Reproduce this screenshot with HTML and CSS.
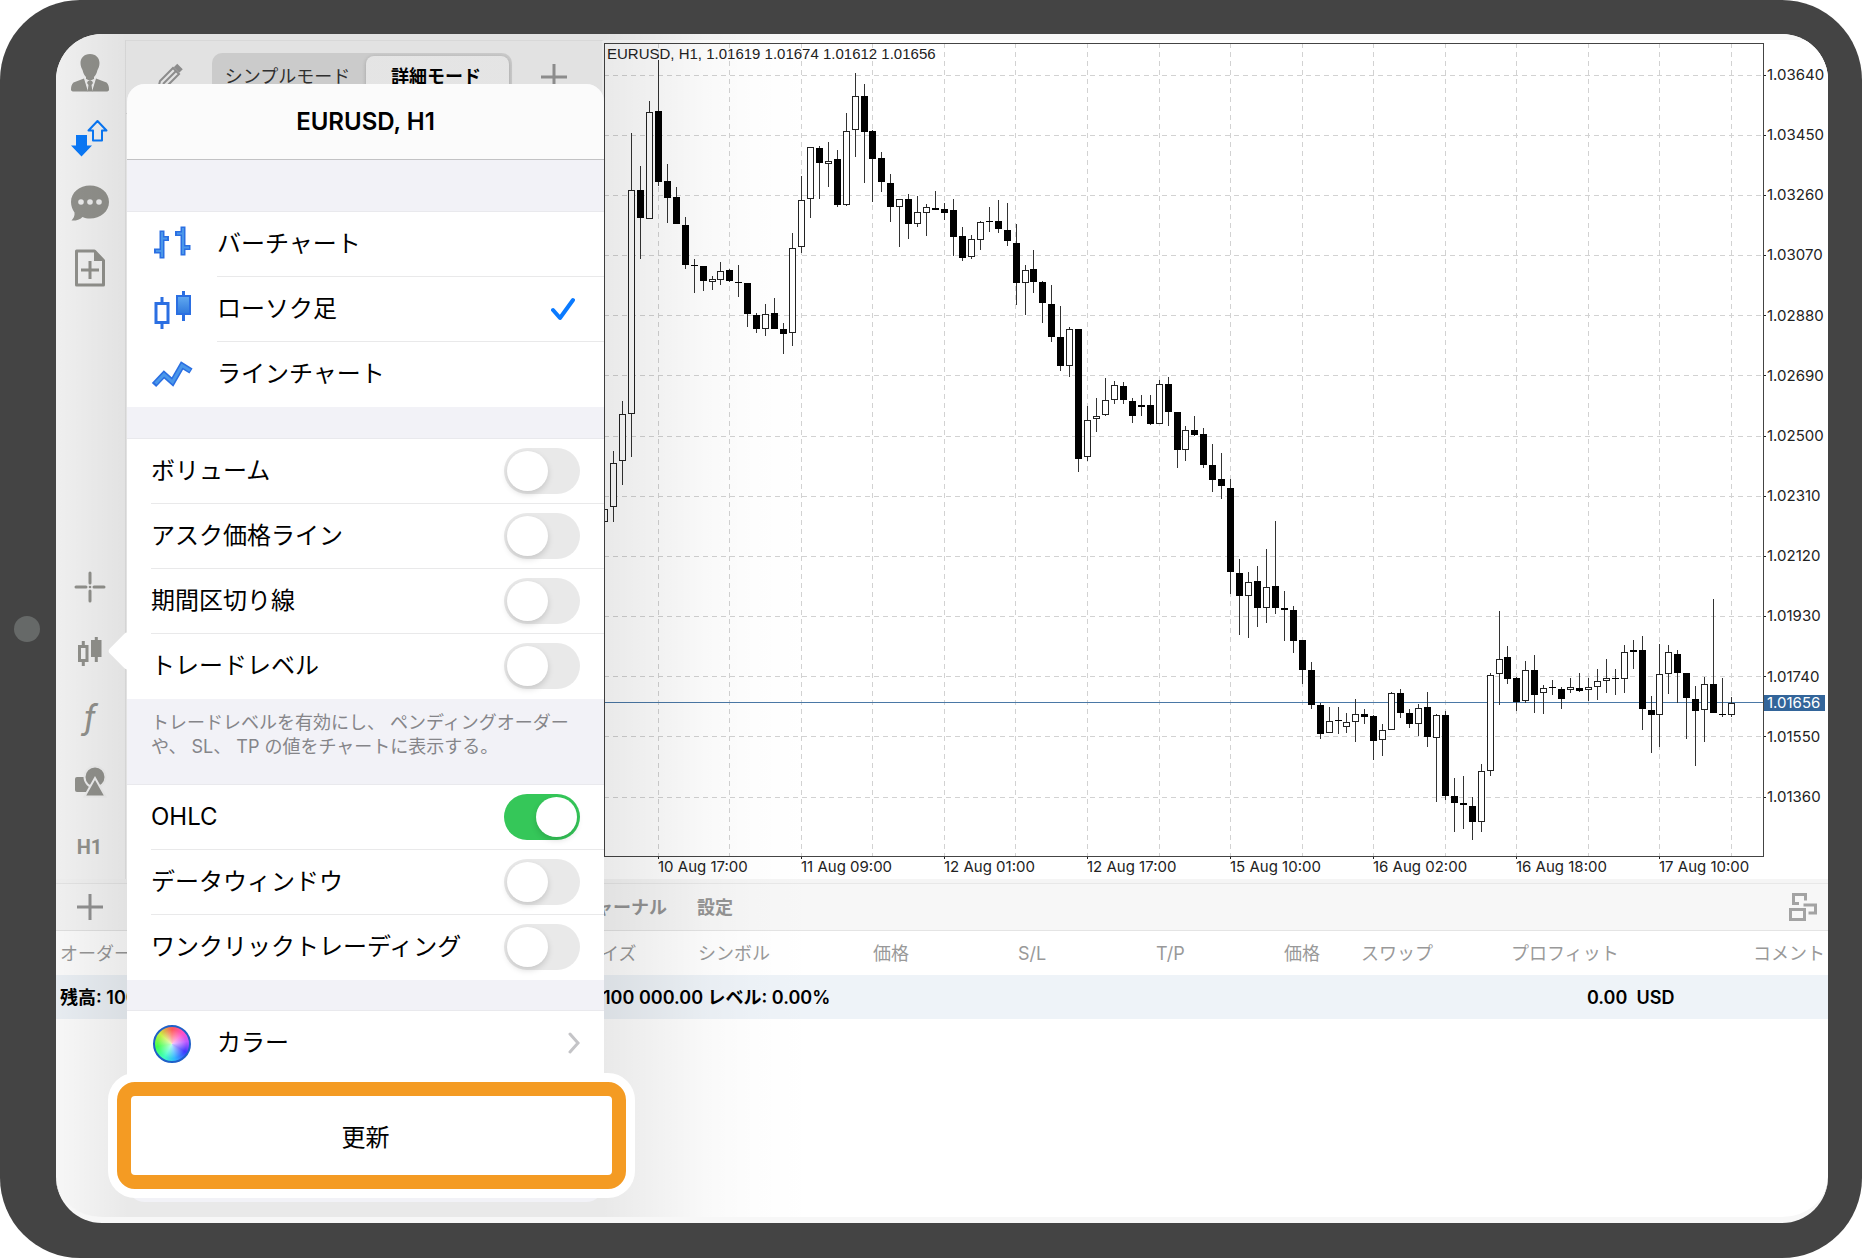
FILE: index.html
```html
<!DOCTYPE html>
<html lang="ja">
<head>
<meta charset="utf-8">
<title>EURUSD, H1</title>
<meta name="viewport" content="width=device-width, initial-scale=1">
<link rel="stylesheet" href="styles.css">
</head>
<body>
<div class="device">
  <div class="screen">
    <div class="workspace">
      <nav class="sidebar" aria-label="メイン">
        <div class="sidebar-group">
          <button class="tool" type="button" aria-label="アカウント">
            <svg width="38" height="38" viewBox="0 0 38 38" fill="currentColor"><path d="M19 0c6 0 9.500 4 9.500 9 0 3-1 5-2 7-1 4-2.500 6-3.500 7l0 3-4 2-4-2v-3c-1-1-2.500-3-3.500-7-1-2-2-4-2-7 0-5 3.500-9 9.500-9z"/><path d="M13 24.500 2.500 28.500C.5 30 0 33 0 35.500Q0 37.500 3 37.500H17L13 24.500zM25 24.500 35.500 28.500C37.500 30 38 33 38 35.500Q38 37.500 35 37.500H21L25 24.500z"/><path d="M13.500 24 17.500 37.500h3l4-13.500-5.500 3z" fill="#f2f2f2"/><path d="M17 27h4l1 2-1.500 2 1 6.500h-5l1-6.500L16 29z"/></svg>
          </button>
          <button class="tool tool-active" type="button" aria-label="トレード">
            <svg width="38" height="38" viewBox="0 0 38 38"><path d="M26.500 2 35.500 11.500h-4.500v10h-9v-10h-4.500z" fill="none" stroke="currentColor" stroke-width="2" stroke-linejoin="round"/><path d="M5 16h11v10.500h5L10.500 37.500 0 26.500h5z" fill="currentColor"/></svg>
          </button>
          <button class="tool" type="button" aria-label="チャット">
            <svg width="38" height="38" viewBox="0 0 38 38"><path d="M19 1.500c10.500 0 19 7 19 16.500s-8.500 16.500-19 16.500c-3 0-5-.5-7.500-1.500C8.500 36 4 37 .5 36.500c2-2 3.500-5 3-8C1.500 26 0 22 0 18 0 8.500 8.500 1.500 19 1.500z" fill="currentColor"/><g fill="#f2f2f2"><circle cx="10" cy="18" r="2.800"/><circle cx="19" cy="18" r="2.800"/><circle cx="28" cy="18" r="2.800"/></g></svg>
          </button>
          <button class="tool" type="button" aria-label="新規注文">
            <svg width="38" height="38" viewBox="0 0 38 38"><path d="M5.500 2h18L32.500 11.500V36h-27z" fill="none" stroke="currentColor" stroke-width="3" stroke-linejoin="round"/><path d="M23 1.500 33.500 12H23z" fill="currentColor"/><path d="M19 12v18M10 21h18" stroke="currentColor" stroke-width="3"/></svg>
          </button>
        </div>
        <div class="sidebar-group">
          <button class="tool" type="button" aria-label="十字線">
            <svg width="38" height="38" viewBox="0 0 38 38"><path d="M5 19h10M23 19h10M19 5v10M19 23v10" stroke="currentColor" stroke-width="3" stroke-linecap="round"/><circle cx="19" cy="19" r="1.300" fill="currentColor"/></svg>
          </button>
          <button class="tool" type="button" aria-label="チャート設定">
            <svg width="38" height="38" viewBox="0 0 38 38" fill="none" stroke="currentColor" stroke-width="3"><path d="M8.500 13.500h7.500v14H8.500zM12.300 8v5M12.300 28v5"/><path d="M21.500 8.500h7.500v14h-7.500z" fill="currentColor"/><path d="M25.300 4v5M25.300 23v6"/></svg>
          </button>
          <button class="tool tool-function" type="button" aria-label="インディケータ">ƒ</button>
          <button class="tool" type="button" aria-label="オブジェクト">
            <svg width="38" height="38" viewBox="0 0 38 38" fill="currentColor"><rect x="4" y="14" width="17" height="15" rx="2"/><circle cx="24" cy="14" r="10.500" stroke="#f2f2f2" stroke-width="2"/><path d="M24 15 34.500 33.500h-21z" stroke="#f2f2f2" stroke-width="2"/></svg>
          </button>
          <button class="tool tool-period" type="button">H1</button>
        </div>
      </nav>

      <section class="quotes" aria-label="気配値">
        <div class="quotes-bar">
          <button class="bare" type="button" aria-label="編集">
            <svg width="28" height="28" viewBox="0 0 28 28" fill="none" stroke="currentColor" stroke-width="3"><path d="M2 26 4 18 17 5l6 6L10 24z" stroke-width="2"/><path d="M7 21 20 8" stroke-width="2"/><path d="M19.500 2.500 25 8" stroke-width="5"/></svg>
          </button>
          <div class="segmented">
            <button class="segment" type="button">シンプルモード</button>
            <button class="segment segment-on" type="button">詳細モード</button>
          </div>
          <button class="bare" type="button" aria-label="追加">
            <svg width="28" height="28" viewBox="0 0 28 28"><path d="M1 14h26M14 1v26" stroke="currentColor" stroke-width="3"/></svg>
          </button>
        </div>
      </section>

      <section class="chart" aria-label="チャート">
        <div class="plot">
          <p class="ohlc">EURUSD, H1, 1.01619 1.01674 1.01612 1.01656</p>
          <svg id="plot" class="plot-canvas" viewBox="604 43 1160 814" preserveAspectRatio="none" role="img" aria-label="EURUSD H1 ローソク足"></svg>
        </div>
        <div class="price-axis">
          <span>1.03640</span><span>1.03450</span><span>1.03260</span><span>1.03070</span><span>1.02880</span><span>1.02690</span><span>1.02500</span><span>1.02310</span><span>1.02120</span><span>1.01930</span><span>1.01740</span><span>1.01550</span><span>1.01360</span>
          <strong class="price-now">1.01656</strong>
        </div>
        <div class="time-axis">
          <span>10 Aug 17:00</span><span>11 Aug 09:00</span><span>12 Aug 01:00</span><span>12 Aug 17:00</span><span>15 Aug 10:00</span><span>16 Aug 02:00</span><span>16 Aug 18:00</span><span>17 Aug 10:00</span>
        </div>
      </section>
    </div>

    <section class="terminal" aria-label="ターミナル">
      <div class="terminal-bar">
        <button class="bare terminal-add" type="button" aria-label="追加">
          <svg width="28" height="28" viewBox="0 0 28 28"><path d="M1 14h26M14 1v26" stroke="currentColor" stroke-width="3"/></svg>
        </button>
        <div class="tabs">
          <button class="tab" type="button">ジャーナル</button>
          <button class="tab" type="button">設定</button>
        </div>
        <button class="bare" type="button" aria-label="レイアウト">
          <svg width="30" height="30" viewBox="0 0 30 30" fill="none" stroke="#a3a3a3" stroke-width="3"><path d="M2.500 17.500h14v10h-14zM11 11.500H5.500v-9h12v6M15.500 13h12v8h-7"/></svg>
        </button>
      </div>
      <table class="orders">
        <colgroup><col><col class="w-size"><col class="w-symbol"><col class="w-price"><col class="w-sl"><col class="w-tp"><col class="w-last"><col class="w-swap"><col class="w-profit"><col class="w-comment"></colgroup>
        <thead>
          <tr><th>オーダー</th><th>サイズ</th><th>シンボル</th><th>価格</th><th>S/L</th><th>T/P</th><th>価格</th><th>スワップ</th><th>プロフィット</th><th>コメント</th></tr>
        </thead>
        <tbody>
          <tr><td>残高: 100 000.00</td><td class="level" colspan="7">100 000.00 レベル: 0.00%</td><td class="total" colspan="2">0.00&nbsp; USD</td></tr>
        </tbody>
      </table>
    </section>

    <form class="popover">
      <h1 class="popover-title">EURUSD, H1</h1>
      <div class="group group-first">
        <label class="row">
          <svg class="row-icon" width="42" height="42" viewBox="0 0 42 42" fill="none"><path d="M11 6.500v28M3 27h8M11 14.500h7M32 2.500v29M24 9.500h8M32 23.500h7.500" stroke="#2b6fe2" stroke-width="5"/><path d="M11 8v25M5 27h6M11 14.500h5M32 4v26M26 9.500h6M32 23.500h6" stroke="#4a97ea" stroke-width="2"/></svg>
          <span class="row-body">バーチャート<input class="pick" type="radio" name="type"><svg class="tick" width="24" height="24" viewBox="0 0 24 24"><path d="M2 13 9 21 22 3" fill="none" stroke="#0a7aff" stroke-width="3" stroke-linecap="round" stroke-linejoin="round"/></svg></span>
        </label>
        <label class="row">
          <svg class="row-icon" width="42" height="42" viewBox="0 0 42 42"><defs><linearGradient id="blue" x2="0" y2="1"><stop stop-color="#62aaf0"/><stop offset="1" stop-color="#2f78dc"/></linearGradient></defs><path d="M5 14.500h12v19H5zM11 8v6M11 34v6" fill="none" stroke="#2b6fe2" stroke-width="3"/><path d="M26 7h13v18H26z" fill="url(#blue)" stroke="#2b6fe2" stroke-width="2"/><path d="M32.500 2v5M32.500 25v7" stroke="#2b6fe2" stroke-width="3"/></svg>
          <span class="row-body">ローソク足<input class="pick" type="radio" name="type" checked><svg class="tick" width="24" height="24" viewBox="0 0 24 24"><path d="M2 13 9 21 22 3" fill="none" stroke="#0a7aff" stroke-width="4" stroke-linecap="round" stroke-linejoin="round"/></svg></span>
        </label>
        <label class="row">
          <svg class="row-icon" width="42" height="42" viewBox="0 0 42 42" fill="none"><path d="M3 31 13 20.500 21.500 28 31 11.500 40 17" stroke="#2b6fe2" stroke-width="6"/><path d="M4.500 29.500 13 20.500 21.500 28 31 11.500 39 16.500" stroke="#4a97ea" stroke-width="3"/></svg>
          <span class="row-body">ラインチャート<input class="pick" type="radio" name="type"><svg class="tick" width="24" height="24" viewBox="0 0 24 24"><path d="M2 13 9 21 22 3" fill="none" stroke="#0a7aff" stroke-width="3" stroke-linecap="round" stroke-linejoin="round"/></svg></span>
        </label>
      </div>
      <div class="group">
        <label class="row"><span class="row-body">ボリューム<input class="switch" type="checkbox"></span></label>
        <label class="row"><span class="row-body">アスク価格ライン<input class="switch" type="checkbox"></span></label>
        <label class="row"><span class="row-body">期間区切り線<input class="switch" type="checkbox"></span></label>
        <label class="row"><span class="row-body">トレードレベル<input class="switch" type="checkbox"></span></label>
      </div>
      <p class="note">トレードレベルを有効にし、 ペンディングオーダーや、 SL、 TP の値をチャートに表示する。</p>
      <div class="group group-after-note">
        <label class="row"><span class="row-body">OHLC<input class="switch" type="checkbox" checked></span></label>
        <label class="row"><span class="row-body">データウィンドウ<input class="switch" type="checkbox"></span></label>
        <label class="row"><span class="row-body">ワンクリックトレーディング<input class="switch" type="checkbox"></span></label>
      </div>
      <div class="group group-last">
        <a class="row" href="#colors">
          <span class="row-icon wheel"></span>
          <span class="row-body">カラー<svg class="chevron" width="12" height="22" viewBox="0 0 12 22"><path d="M2 2 10 11 2 20" fill="none" stroke="#c4c4c7" stroke-width="3" stroke-linecap="round"/></svg></span>
        </a>
        <button class="refresh" type="button">更新</button>
      </div>
    </form>
  </div>
</div>
<script src="chart.js"></script>
</body>
</html>
```
FILE: styles.css
```css
* { box-sizing: border-box; }

body {
  margin: 0;
  background: #fff;
  color: #000;
  font-family: Inter, "Noto Sans CJK JP", sans-serif;
  font-size: 18px;
}

button {
  margin: 0;
  padding: 0;
  border: 0;
  background: none;
  color: inherit;
  font: inherit;
}

svg { display: block; }

.device {
  position: relative;
  display: flex;
  min-height: 100vh;
  padding: 34px 34px 35px 56px;
  border-radius: 80px;
  background: #444;
}

/* home button */
.device::before {
  content: "";
  position: absolute;
  left: 14px;
  top: 50%;
  width: 26px;
  height: 26px;
  margin-top: -13px;
  border-radius: 50%;
  background: #666968;
}

.screen {
  position: relative;
  flex: 1;
  display: flex;
  flex-direction: column;
  min-width: 0;
  overflow: hidden;
  border-radius: 46px;
  border-bottom: 6px solid #f7f7f7;
  background: #fff;
}

/* soft shade that the popover casts on everything behind it */
.screen::after {
  content: "";
  position: absolute;
  inset: 0 0 -6px;
  background: linear-gradient(to right,
    rgba(0, 0, 0, 0.03),
    rgba(0, 0, 0, 0.085) 71px,
    rgba(0, 0, 0, 0.085) 548px,
    rgba(0, 0, 0, 0.055) 600px,
    rgba(0, 0, 0, 0.025) 650px,
    rgba(0, 0, 0, 0.008) 700px,
    rgba(0, 0, 0, 0) 760px);
  pointer-events: none;
}

.workspace {
  display: grid;
  grid-template-columns: 70px 478px minmax(0, 1fr);
  padding-top: 6px;
  background: #f7f7f7;
}

/* sidebar */
.sidebar {
  display: flex;
  flex-direction: column;
  justify-content: space-between;
  padding-right: 2px;
  border-right: 1px solid #e8e8e8;
  color: #94948f;
}

.sidebar-group {
  display: flex;
  flex-direction: column;
}

.tool {
  display: flex;
  align-items: center;
  justify-content: center;
  height: 65px;
}

.tool-active { color: #0a7cff; }

.tool-function {
  font-size: 34px;
  font-style: italic;
  line-height: 1;
}

.tool-period {
  font-family: Roboto, sans-serif;
  font-size: 20px;
  font-weight: 700;
}

/* quotes toolbar */
.quotes {
  border-top: 1px solid #ececec;
  border-right: 2px solid #fff;
}

.quotes-bar {
  display: flex;
  align-items: center;
  justify-content: space-between;
  height: 73px;
  padding: 0 34px 0 30px;
  border-bottom: 1px solid #ddd;
  color: #999;
}

.bare {
  display: flex;
  align-items: center;
  justify-content: center;
}

.segmented {
  display: flex;
  width: 300px;
  height: 48px;
  padding: 3px;
  border-radius: 10px;
  background: #dedede;
  color: #333;
  line-height: 24px;
}

.segment {
  flex: 1;
  padding: 0 6px 0 0;
  border-radius: 8px;
}

.segment-on {
  flex: 0 0 143px;
  padding: 0 3px 0 0;
  background: #fafafa;
  box-shadow: 0 1px 4px rgba(0, 0, 0, 0.2);
  color: #000;
  font-weight: 700;
}

/* chart */
.chart {
  display: grid;
  grid-template-columns: minmax(0, 1fr) 64px;
  padding-top: 3px;
  background: #fff;
  color: #222;
  font-size: 15px;
}

.plot { position: relative; }

.plot-canvas {
  width: 100%;
  height: 814px;
  overflow: visible;
}

.ohlc {
  position: absolute;
  left: 3px;
  top: 2px;
  margin: 0;
  color: #222;
  font-family: "Liberation Sans", Arial, sans-serif;
  font-size: 15px;
  line-height: 18px;
}

.price-axis {
  position: relative;
  display: flex;
  flex-direction: column;
  justify-content: space-between;
  padding: 22px 0 50px 3px;
  line-height: 20px;
}

.price-now {
  position: absolute;
  left: 0;
  top: 652px;
  width: 61px;
  padding-left: 3px;
  background: #33659a;
  color: #fff;
  font-weight: 400;
  line-height: 16px;
}

.time-axis {
  grid-column: 1;
  display: flex;
  height: 22px;
  padding-left: 54px;
  line-height: 20px;
  white-space: nowrap;
}

.time-axis span { flex: 0 0 143px; }
.time-axis span:last-child { flex-basis: auto; }

/* terminal */
.terminal { border-top: 4px solid #f5f5f5; }

.terminal-bar {
  display: flex;
  align-items: center;
  height: 48px;
  padding-right: 10px;
  border-top: 1px solid #e8e8e8;
  border-bottom: 1px solid #e4e4e4;
  background: #f7f7f7;
  color: #949494;
}

.terminal-add { width: 68px; }

.tabs {
  flex: 1;
  display: flex;
  gap: 30px;
  padding: 2px 0 0 454px;
  line-height: 24px;
}

.tab { font-weight: 700; }

.orders {
  width: 100%;
  border-collapse: collapse;
  table-layout: fixed;
  line-height: 24px;
  white-space: nowrap;
}

.orders th,
.orders td {
  height: 44px;
  padding: 2px 0 0 4px;
  text-align: left;
}

.orders th {
  color: #999;
  font-weight: 400;
}

.orders td {
  background: #eef3f8;
  font-weight: 600;
}

.orders .level { padding-left: 24px; }
.orders .total { padding-left: 80px; }

.w-size { width: 115px; }
.w-symbol { width: 175px; }
.w-price { width: 145px; }
.w-sl { width: 138px; }
.w-tp { width: 128px; }
.w-last { width: 77px; }
.w-swap { width: 150px; }
.w-profit { width: 242px; }
.w-comment { width: 79px; }

/* chart settings popover */
.popover {
  position: absolute;
  z-index: 1;
  left: 71px;
  top: 50px;
  width: 477px;
  padding-bottom: 13px;
  border-radius: 18px;
  background: #f2f2f7;
  font-size: 24px;
}

/* arrow pointing at the chart settings button */
.popover::before {
  content: "";
  position: absolute;
  left: -14px;
  top: 553px;
  width: 28px;
  height: 28px;
  border-radius: 4px;
  background: #fff;
  transform: rotate(45deg);
}

.popover-title {
  margin: 0;
  border-bottom: 1px solid #c2c2c4;
  border-radius: 18px 18px 0 0;
  background: #fbfbfb;
  font-size: 24px;
  font-weight: 600;
  line-height: 75px;
  text-align: center;
}

.group {
  position: relative;
  margin-top: 31px;
  border-top: 1px solid #e9e9ed;
  background: #fff;
}

.group-first { margin-top: 51px; }
.group-after-note { margin-top: 0; }
.group-last { margin-top: 30px; }

.row {
  display: flex;
  align-items: center;
  gap: 24px;
  height: 65px;
  padding-left: 24px;
  color: #000;
  line-height: 32px;
  text-decoration: none;
}

.row-icon {
  flex: 0 0 42px;
}

.row-body {
  flex: 1;
  display: flex;
  align-items: center;
  justify-content: space-between;
  height: 65px;
  padding-right: 24px;
  border-bottom: 1px solid #e9e9ea;
}

.row:last-of-type .row-body { border-bottom-color: transparent; }

.pick {
  position: absolute;
  opacity: 0;
}

.tick {
  visibility: hidden;
  margin-right: 5px;
}

.pick:checked + .tick { visibility: visible; }

.switch {
  appearance: none;
  width: 76px;
  height: 46px;
  margin: 0;
  padding: 3px;
  border-radius: 23px;
  background: #e9e9e9;
}

.switch::before {
  content: "";
  display: block;
  width: 41px;
  height: 40px;
  border-radius: 50%;
  background: #fff;
  box-shadow: 0 3px 6px rgba(0, 0, 0, 0.15);
}

.switch:checked { background: #35c759; }
.switch:checked::before { margin-left: auto; }

.note {
  margin: 0;
  height: 85px;
  padding: 12px 24px 0;
  color: #858589;
  font-size: 18px;
  line-height: 24px;
}

.wheel {
  flex-basis: 38px;
  height: 38px;
  margin: 0 2px;
  border: 2px solid #1f60c8;
  border-radius: 50%;
  background:
    radial-gradient(circle, rgba(255, 255, 255, 0.7), rgba(255, 255, 255, 0) 60%),
    conic-gradient(#ff5a5a, #ff50c8 45deg, #c05aff 80deg, #4038ff 120deg, #30b8ff 170deg, #40ffc0 210deg, #40ff50 260deg, #c8f040 310deg, #ff5a5a);
}

.refresh {
  display: block;
  width: 509px;
  height: 107px;
  margin: 6px 0 0 -10px;
  padding-right: 12px;
  border: 14px solid #f49b23;
  border-radius: 18px;
  background: #fff;
  box-shadow: 0 0 0 9px #fff;
}
```
FILE: chart.js
```js
// Each candle: [high, body top, body bottom, low, filled], in plot units.
const candles = [
  [509,509,522,522,0],[451,463,507,522,0],[401,414,461,485,0],[133,190,414,457,0],[166,190,218,259,1],[101,112,219,219,0],
  [60,111,182,186,1],[164,181,198,223,1],[187,197,224,224,1],[217,225,265,269,1],[259,265,265,293,1],[266,266,281,291,1],
  [276,279,282,290,0],[262,271,280,285,0],[269,270,281,282,1],[265,282,282,297,1],[283,283,314,327,1],[313,315,329,333,1],
  [304,314,329,336,0],[298,313,329,329,1],[323,329,334,354,1],[233,248,333,346,0],[176,200,247,253,0],[147,147,199,218,0],
  [146,148,163,199,1],[142,161,163,187,0],[150,159,205,207,1],[113,131,205,206,0],[73,96,130,157,0],[84,96,132,183,1],
  [130,131,159,202,1],[152,158,182,192,1],[174,183,207,222,1],[199,199,207,247,0],[194,199,224,239,1],[196,212,224,227,0],
  [204,207,213,236,0],[191,208,210,210,1],[203,209,213,220,1],[199,210,237,256,1],[227,236,258,261,1],[235,239,257,259,0],
  [221,222,240,250,0],[207,221,222,232,1],[200,221,229,233,1],[203,230,241,246,1],[224,243,283,305,1],[265,270,283,315,0],
  [250,269,282,293,1],[281,282,303,323,1],[285,304,337,342,1],[306,337,366,371,1],[327,329,366,377,0],[329,329,459,472,1],
  [406,420,457,461,0],[398,416,419,432,0],[378,400,415,416,0],[381,385,400,404,0],[382,386,400,404,1],[398,401,416,423,1],
  [395,405,407,416,1],[395,405,424,425,1],[380,384,424,424,0],[377,384,412,426,1],[412,412,450,468,1],[426,430,450,461,0],
  [416,430,435,436,1],[428,434,465,468,1],[444,465,480,492,1],[453,479,486,499,1],[479,488,572,594,1],[559,573,596,635,1],
  [572,582,596,638,0],[566,581,608,627,1],[549,587,608,623,0],[521,586,608,614,1],[591,608,610,641,1],[606,610,641,653,1],
  [640,640,670,684,1],[662,670,705,709,1],[703,705,734,739,1],[707,721,733,733,0],[707,720,721,734,1],[713,722,727,733,0],
  [699,714,722,742,0],[709,714,717,724,1],[715,716,741,760,1],[724,730,740,756,0],[692,693,730,730,0],[689,693,713,718,1],
  [709,713,724,728,1],[704,708,724,736,0],[692,707,737,747,1],[714,715,738,802,0],[711,715,796,800,1],[778,796,803,832,1],
  [776,803,805,829,1],[797,806,822,840,1],[764,771,822,832,0],[673,675,771,776,0],[611,659,674,705,0],[646,657,679,684,1],
  [677,678,702,711,1],[661,670,701,703,0],[655,670,695,713,1],[685,688,693,714,0],[680,687,687,695,1],[687,689,699,709,1],
  [678,687,690,693,0],[673,688,691,692,1],[678,687,690,701,0],[669,681,687,700,0],[659,678,681,693,0],[669,678,678,695,1],
  [645,652,679,693,0],[640,650,652,669,1],[636,650,709,730,1],[696,710,715,753,1],[644,674,715,747,0],[645,652,674,694,0],
  [650,654,673,703,1],[673,673,698,739,1],[686,699,711,766,1],[677,684,710,742,0],[599,684,713,713,1],[678,714,714,717,1],
  [697,703,715,717,0]
];

const LEFT = 604, TOP = 43, RIGHT = 1764, BOTTOM = 856;
const parts = [];
const line = (x1, y1, x2, y2, stroke, extra = '') =>
  parts.push(`<path d="M${x1} ${y1}L${x2} ${y2}" stroke="${stroke}" ${extra}/>`);

// grid with axis ticks
for (let i = 0; i < 13; i++) {
  const y = Math.floor(75 + i * 60.17) + 0.5;
  line(LEFT, y, RIGHT, y, '#d2d2d2', 'stroke-dasharray="5 4"');
  line(RIGHT, y, RIGHT + 2, y, '#222');
}
for (let i = 0; i < 16; i++) {
  const x = Math.floor(658.3 + i * 71.53) + 0.5;
  line(x, TOP, x, BOTTOM, '#d2d2d2', 'stroke-dasharray="5 4"');
  if (i % 2 === 0) line(x, BOTTOM, x, BOTTOM + 3, '#222');
}

// current price
line(LEFT, 702.5, RIGHT, 702.5, '#4a78a6');

candles.forEach(([high, top, bottom, low, filled], i) => {
  const x = Math.floor(604.7 + i * 8.943);
  line(x + 0.5, high, x + 0.5, low, '#333');
  if (filled) {
    parts.push(`<rect x="${x - 3}" y="${top}" width="7" height="${Math.max(bottom - top, 1)}" fill="#000"/>`);
  } else {
    parts.push(`<rect x="${x - 2.5}" y="${top + 0.5}" width="6" height="${Math.max(bottom - top - 1, 2)}" fill="#fff" stroke="#222"/>`);
  }
});

// frame
parts.push(`<rect x="${LEFT + 0.5}" y="${TOP + 0.5}" width="${RIGHT - LEFT - 1}" height="${BOTTOM - TOP}" fill="none" stroke="#444"/>`);
document.getElementById('plot').innerHTML = parts.join('');
```
